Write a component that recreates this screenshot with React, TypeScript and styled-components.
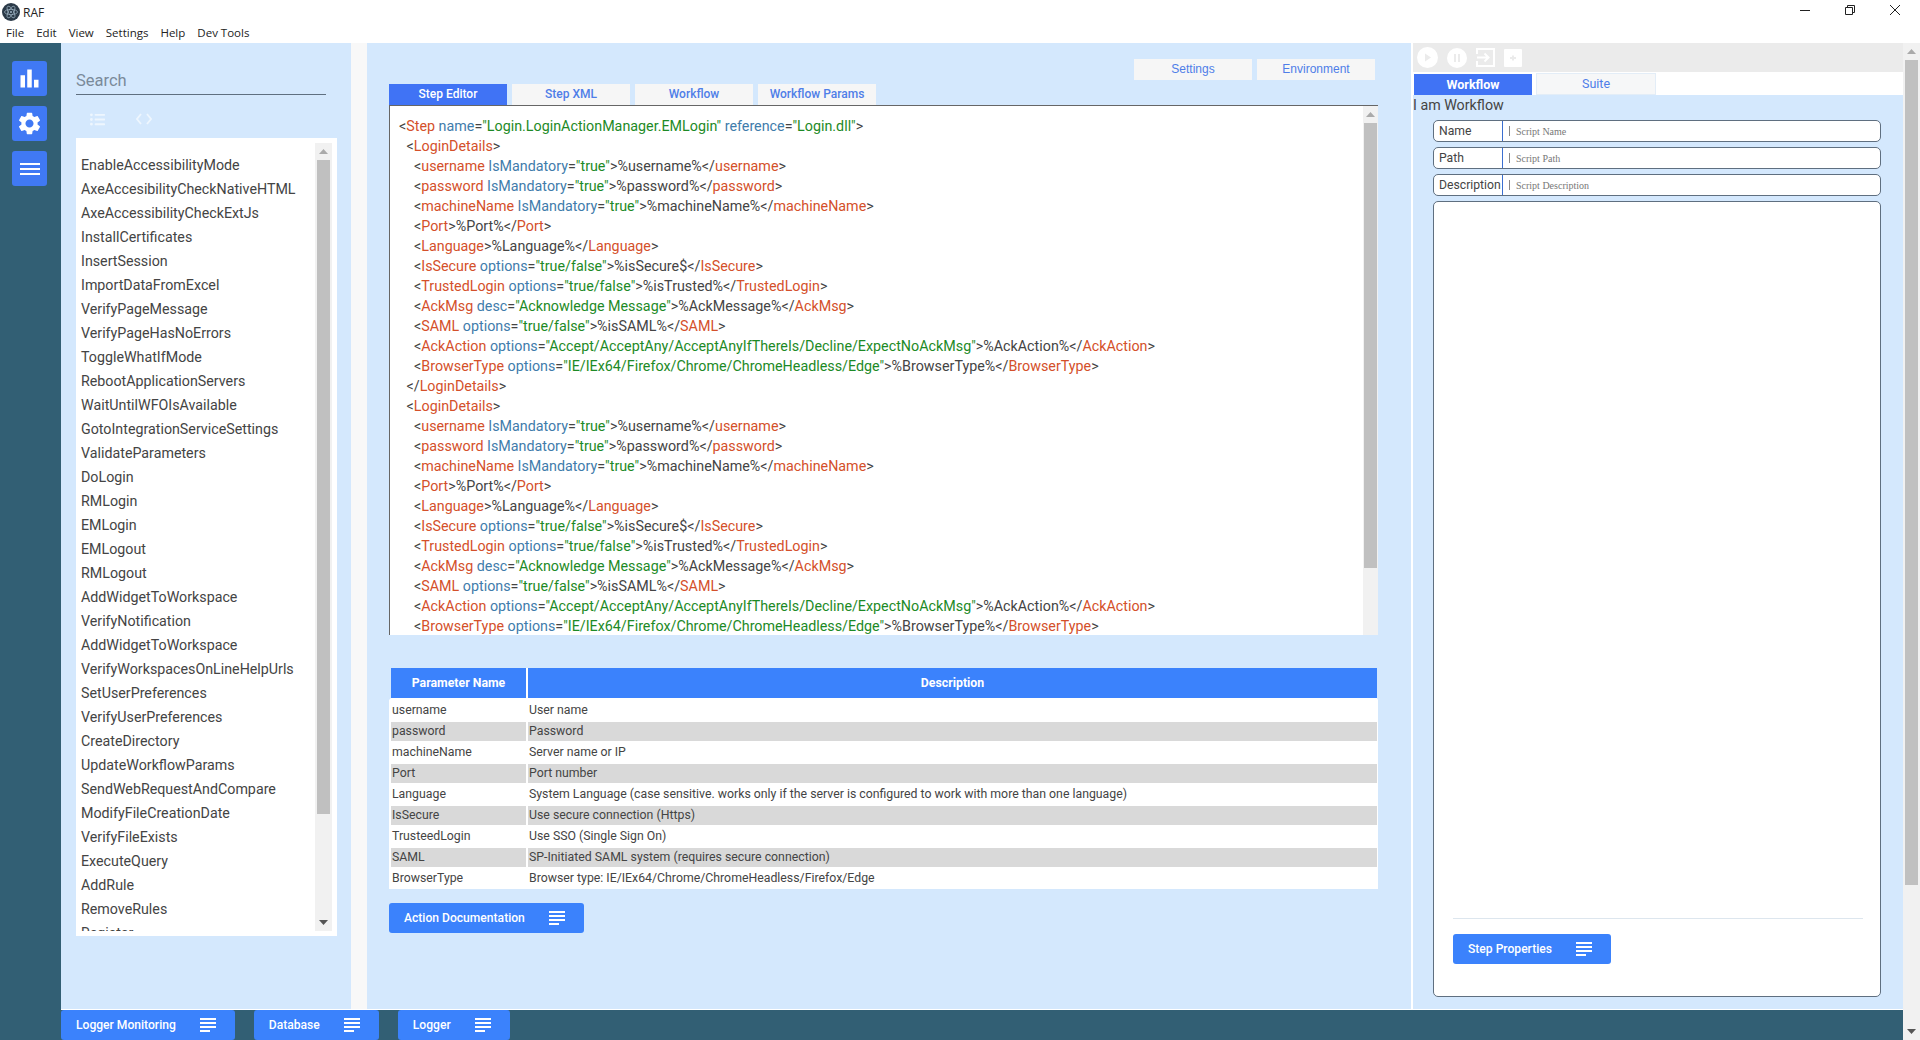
import React from "react";
import styled, {createGlobalStyle} from "styled-components";
import {MdBarChart, MdSettings} from "react-icons/md";
import {FaListUl} from "react-icons/fa";

const GlobalStyle = createGlobalStyle`
    html, body {
        margin: 0;
        padding: 0;
        overflow: hidden;
        background: #fff;
    }
    * { box-sizing: border-box; }
`;

const color = {
    panel: "#d4e8fd",
    sidebar: "#325f74",
    blue: "#3b82fc",
    tabBlue: "#4073f5",
    tabIdle: "#f6f6f6",
    tabText: "#4f7ee8",
    text: "#444",
    line: "#5f6f80",
};

const ACTIONS = [
    "EnableAccessibilityMode", "AxeAccesibilityCheckNativeHTML", "AxeAccessibilityCheckExtJs", "InstallCertificates",
    "InsertSession", "ImportDataFromExcel", "VerifyPageMessage", "VerifyPageHasNoErrors", "ToggleWhatIfMode",
    "RebootApplicationServers", "WaitUntilWFOIsAvailable", "GotoIntegrationServiceSettings", "ValidateParameters",
    "DoLogin", "RMLogin", "EMLogin", "EMLogout", "RMLogout", "AddWidgetToWorkspace", "VerifyNotification",
    "AddWidgetToWorkspace", "VerifyWorkspacesOnLineHelpUrls", "SetUserPreferences", "VerifyUserPreferences",
    "CreateDirectory", "UpdateWorkflowParams", "SendWebRequestAndCompare", "ModifyFileCreationDate", "VerifyFileExists",
    "ExecuteQuery", "AddRule", "RemoveRules", "Register",
];

const PARAMS = [
    ["username", "User name"],
    ["password", "Password"],
    ["machineName", "Server name or IP"],
    ["Port", "Port number"],
    ["Language", "System Language (case sensitive. works only if the server is configured to work with more than one language)"],
    ["IsSecure", "Use secure connection (Https)"],
    ["TrusteedLogin", "Use SSO (Single Sign On)"],
    ["SAML", "SP-Initiated SAML system (requires secure connection)"],
    ["BrowserType", "Browser type: IE/IEx64/Chrome/ChromeHeadless/Firefox/Edge"],
];

type XmlLine = {tag: string; attr?: [string, string]; body: string; close?: string};

const LOGIN_CHILDREN: XmlLine[] = [
    {tag: "username", attr: ["IsMandatory", "true"], body: "%username%"},
    {tag: "password", attr: ["IsMandatory", "true"], body: "%password%"},
    {tag: "machineName", attr: ["IsMandatory", "true"], body: "%machineName%"},
    {tag: "Port", body: "%Port%"},
    {tag: "Language", body: "%Language%"},
    {tag: "IsSecure", attr: ["options", "true/false"], body: "%isSecure$"},
    {tag: "TrustedLogin", attr: ["options", "true/false"], body: "%isTrusted%"},
    {tag: "AckMsg", attr: ["desc", "Acknowledge Message"], body: "%AckMessage%"},
    {tag: "SAML", attr: ["options", "true/false"], body: "%isSAML%"},
    {tag: "AckAction", attr: ["options", "Accept/AcceptAny/AcceptAnyIfThereIs/Decline/ExpectNoAckMsg"], body: "%AckAction%"},
    {tag: "BrowserType", attr: ["options", "IE/IEx64/Firefox/Chrome/ChromeHeadless/Edge"], body: "%BrowserType%"},
];

const Frame = styled.div`
    width: 1920px;
    height: 1040px;
    display: flex;
    flex-direction: column;
    overflow: hidden;
    font-family: Roboto, sans-serif;
    color: ${color.text};
`;

const TitleBar = styled.div`
    height: 24px;
    display: flex;
    align-items: center;
    padding-left: 2px;
    gap: 3px;
    font-family: "Open Sans", sans-serif;
    font-size: 12px;
    color: #222;
`;

const WindowButtons = styled.div`
    margin-left: auto;
    display: flex;
    margin-top: -4px;
    padding-right: 20px;
    gap: 35px;
`;

const MenuBar = styled.div`
    height: 19px;
    display: flex;
    font-family: "Open Sans", sans-serif;
    font-size: 11.5px;
    line-height: 18px;
    color: #222;
`;

const MenuItem = styled.span`
    padding: 0 6px;
`;

const Page = styled.div`
    flex: 1;
    display: flex;
    min-height: 0;
`;

const PageMain = styled.div`
    flex: 1;
    display: flex;
    flex-direction: column;
    min-width: 0;
`;

const Columns = styled.div`
    flex: 1;
    display: flex;
    min-height: 0;
`;

const Sidebar = styled.nav`
    width: 61px;
    background: ${color.sidebar};
    display: flex;
    flex-direction: column;
    align-items: center;
    padding: 18px 2px 0 0;
    gap: 10px;
`;

const SideButton = styled.div`
    width: 35px;
    height: 35px;
    background: #4079f4;
    border-radius: 3px;
    color: #fff;
    display: flex;
    align-items: center;
    justify-content: center;
`;

const Workspace = styled.div`
    flex: 1;
    display: flex;
    padding-bottom: 1px;
    background: #fff;
    min-width: 0;
`;

const LeftPanel = styled.section`
    width: 290px;
    background: ${color.panel};
    padding: 25px 14px 0 15px;
`;

const Divider = styled.div`
    width: 16px;
    background: #f8f8f8;
`;

const SearchBox = styled.div`
    width: 250px;
    height: 27px;
    border-bottom: 1px solid ${color.line};
    font-size: 16.5px;
    line-height: 25px;
    color: #7a8a9a;
`;

const ListTools = styled.div`
    height: 43px;
    display: flex;
    align-items: center;
    gap: 31px;
    padding: 5px 0 0 14px;
    color: #eef6fe;
`;

const ListBox = styled.div`
    width: 261px;
    height: 798px;
    background: #fff;
    display: flex;
    padding: 5px 5px 5px 0;
`;

const ActionList = styled.ul`
    flex: 1;
    list-style: none;
    margin: 0;
    padding: 10px 0 0 5px;
    overflow: hidden;
    font-size: 14.25px;
    line-height: 24px;
    color: #444;
`;

const Track = styled.div<{$width: number}>`
    width: ${props => props.$width}px;
    flex: none;
    background: #f1f1f1;
    display: flex;
    flex-direction: column;
    align-items: center;
`;

const ArrowCell = styled.div`
    height: 17px;
    flex: none;
    width: 100%;
    display: flex;
    align-items: center;
    justify-content: center;
`;

const Thumb = styled.div<{$height: number}>`
    width: 13px;
    height: ${props => props.$height}px;
    flex: none;
    background: #c0c0c0;
`;

const TrackFill = styled.div`
    flex: 1;
`;

const CenterPanel = styled.section`
    width: 1044px;
    background: ${color.panel};
    padding: 16px 33px 0 22px;
`;

const TopTabs = styled.div`
    display: flex;
    justify-content: flex-end;
    gap: 5px;
    padding-right: 3px;
    margin-bottom: 4px;
`;

const TopTab = styled.div`
    width: 118px;
    height: 21px;
    background: ${color.tabIdle};
    color: ${color.tabText};
    font-family: "Liberation Sans", sans-serif;
    font-size: 12px;
    line-height: 21px;
    text-align: center;
`;

const EditorTabs = styled.div`
    display: flex;
    gap: 5px;
`;

const EditorTab = styled.div<{$active?: boolean}>`
    width: 118px;
    height: 21px;
    background: ${props => props.$active ? color.tabBlue : color.tabIdle};
    color: ${props => props.$active ? "#fff" : color.tabText};
    font-size: 12px;
    font-weight: 500;
    line-height: 21px;
    text-align: center;
`;

const Editor = styled.div`
    height: 530px;
    display: flex;
    background: #fff;
    border-top: 1px solid #666;
    border-left: 1px solid #666;
`;

const Code = styled.div`
    flex: 1;
    overflow: hidden;
    padding: 10px 0 0 9px;
    font-size: 14.3px;
    line-height: 20px;
    color: #444;
    white-space: nowrap;
`;

const CodeLine = styled.div<{$indent: number}>`
    padding-left: ${props => props.$indent * 7.5}px;
`;

const TagName = styled.span`
    color: #d4502a;
`;

const AttrName = styled.span`
    color: #3f7cab;
`;

const AttrValue = styled.span`
    color: #1d8a26;
`;

const ParamTable = styled.table`
    width: 989px;
    margin-top: 33px;
    border-collapse: separate;
    border-spacing: 0;
    table-layout: fixed;
    font-size: 12.3px;
`;

const HeadCell = styled.th<{$width?: number}>`
    width: ${props => props.$width ? `${props.$width}px` : "auto"};
    height: 32px;
    padding: 0;
    background: ${color.blue};
    background-clip: padding-box;
    border-bottom: 2px solid #fff;
    border-left: 2px solid #fff;
    color: #fff;
    font-weight: 700;
    font-size: 12.3px;
    text-align: center;

    &:first-child {
        border-left-color: ${color.panel};
    }
    &:last-child {
        border-right: 1px solid ${color.panel};
    }
`;

const BodyCell = styled.td<{$stripe: boolean}>`
    height: 21px;
    padding: 0 0 1px 1px;
    background: ${props => props.$stripe ? "#d9d9d9" : "#fff"};
    background-clip: padding-box;
    border: 1px solid #fff;
    border-left-width: 2px;
    border-right-width: 0;
    color: #444;
    white-space: nowrap;

    &:last-child {
        border-right-width: 1px;
    }
`;

const BlueButton = styled.div`
    display: inline-flex;
    align-items: center;
    flex: none;
    height: 30px;
    padding: 0 19px 0 15px;
    gap: 24px;
    background: ${color.blue};
    border-radius: 3px;
    color: #fff;
    font-size: 12.1px;
    font-weight: 500;
    white-space: nowrap;
`;

const DocButton = styled(BlueButton)`
    margin-top: 14px;
`;

const Gutter = styled.div`
    width: 2px;
`;

const RightPanel = styled.section`
    flex: 1;
    background: ${color.panel};
    display: flex;
    flex-direction: column;
    min-width: 0;
`;

const RunToolbar = styled.div`
    height: 29px;
    flex: none;
    background: #ebebeb;
    display: flex;
    align-items: center;
    padding-left: 4px;
    gap: 9px;
`;

const RunIcon = styled.svg`
    display: block;
`;

const PanelTabs = styled.div`
    height: 23px;
    flex: none;
    background: #fff;
    display: flex;
    align-items: flex-end;
    padding-left: 1px;
    gap: 4px;
`;

const PanelTab = styled.div<{$active?: boolean}>`
    width: ${props => props.$active ? 118 : 120}px;
    height: ${props => props.$active ? 21 : 22}px;
    background: ${props => props.$active ? color.tabBlue : "#f6f7f8"};
    border: ${props => props.$active ? "none" : "1px solid #e3edf7"};
    color: ${props => props.$active ? "#fff" : color.tabText};
    font-size: 12.5px;
    font-weight: ${props => props.$active ? 700 : 400};
    line-height: ${props => props.$active ? 21 : 19}px;
    text-align: center;
`;

const PanelHeading = styled.div`
    height: 25px;
    flex: none;
    font-size: 14.25px;
    line-height: 21px;
`;

const Form = styled.div`
    flex: 1;
    display: flex;
    flex-direction: column;
    gap: 5px;
    padding: 0 22px 12px 20px;
    min-height: 0;
`;

const FormRow = styled.div`
    height: 22px;
    flex: none;
    display: flex;
    background: #fff;
    border: 1px solid ${color.line};
    border-radius: 5px;
`;

const FormLabel = styled.div`
    width: 69px;
    flex: none;
    padding-left: 5px;
    border-right: 1px solid #3b6fd0;
    font-size: 12.2px;
    line-height: 20px;
    white-space: nowrap;
    color: #444;
`;

const FormHint = styled.div`
    padding-left: 6px;
    font-family: "Liberation Serif", serif;
    font-size: 10px;
    line-height: 21px;
    color: #777;
    display: flex;
    align-items: center;
    gap: 6px;
`;

const Caret = styled.span`
    width: 1px;
    height: 10px;
    background: #888;
`;

const StepBox = styled.div`
    flex: 1;
    display: flex;
    flex-direction: column;
    justify-content: flex-end;
    align-items: flex-start;
    padding: 0 17px 32px 19px;
    background: #fff;
    border: 1px solid ${color.line};
    border-radius: 5px;
`;

const StepRule = styled.div`
    width: 100%;
    height: 1px;
    background: #dde6ee;
    margin-bottom: 15px;
`;

const BottomBar = styled.footer`
    height: 30px;
    flex: none;
    background: ${color.sidebar};
    display: flex;
    gap: 19px;
    padding-left: 61px;
`;

const LinesIcon = () => (
    <svg width="16" height="14" viewBox="0 0 16 14" fill="#fff">
        <rect x="0" y="0" width="16" height="2" />
        <rect x="0" y="4" width="16" height="2" />
        <rect x="0" y="8" width="16" height="2" />
        <rect x="0" y="12" width="10" height="2" />
    </svg>
);

const Triangle = ({down}: {down?: boolean}) => (
    <svg width="9" height="5" viewBox="0 0 9 5" fill={down ? "#555" : "#aaa"}>
        <path d={down ? "M0 0h9L4.5 5z" : "M0 5h9L4.5 0z"} />
    </svg>
);

const Scrollbar = ({width, thumb, noEndArrow}: {width: number; thumb: number; noEndArrow?: boolean}) => (
    <Track $width={width}>
        <ArrowCell><Triangle /></ArrowCell>
        <Thumb $height={thumb} />
        <TrackFill />
        {!noEndArrow && <ArrowCell><Triangle down /></ArrowCell>}
    </Track>
);

const AppLogo = () => (
    <svg width="18" height="18" viewBox="0 0 18 18" fill="none" stroke="#9fb4c4" strokeWidth="0.7">
        <circle cx="9" cy="9" r="9" fill="#2b3a48" stroke="none" />
        <ellipse cx="9" cy="9" rx="6.5" ry="2.6" />
        <ellipse cx="9" cy="9" rx="6.5" ry="2.6" transform="rotate(60 9 9)" />
        <ellipse cx="9" cy="9" rx="6.5" ry="2.6" transform="rotate(120 9 9)" />
        <circle cx="9" cy="9" r="1" fill="#9fb4c4" stroke="none" />
    </svg>
);

const Xml = ({line}: {line: XmlLine}) => (
    <>
        {"<"}<TagName>{line.tag}</TagName>
        {line.attr && <>{" "}<AttrName>{line.attr[0]}</AttrName>=<AttrValue>"{line.attr[1]}"</AttrValue></>}
        {">"}{line.body}{"</"}<TagName>{line.tag}</TagName>{">"}
    </>
);

const LoginBlock = () => (
    <>
        <CodeLine $indent={1}>{"<"}<TagName>LoginDetails</TagName>{">"}</CodeLine>
        {LOGIN_CHILDREN.map(line => <CodeLine key={line.tag} $indent={2}><Xml line={line} /></CodeLine>)}
    </>
);

const App = () => (
    <Frame>
        <GlobalStyle />
        <TitleBar>
            <AppLogo />
            RAF
            <WindowButtons>
                <svg width="10" height="10" viewBox="0 0 10 10" stroke="#222" fill="none"><path d="M0 5.5h10" /></svg>
                <svg width="10" height="10" viewBox="0 0 10 10" stroke="#222" fill="none"><path d="M0.5 2.5h7v7h-7zM2.5 2.5v-2h7v7h-2" /></svg>
                <svg width="10" height="10" viewBox="0 0 10 10" stroke="#222" fill="none"><path d="M0 0l10 10M10 0L0 10" /></svg>
            </WindowButtons>
        </TitleBar>
        <MenuBar>
            {["File", "Edit", "View", "Settings", "Help", "Dev Tools"].map(item => <MenuItem key={item}>{item}</MenuItem>)}
        </MenuBar>
        <Page>
            <PageMain>
                <Columns>
                    <Sidebar>
                        <SideButton><MdBarChart size={27} /></SideButton>
                        <SideButton><MdSettings size={27} /></SideButton>
                        <SideButton>
                            <svg width="20" height="12" viewBox="0 0 20 12" fill="#fff">
                                <rect y="0" width="20" height="2" />
                                <rect y="5" width="20" height="2" />
                                <rect y="10" width="20" height="2" />
                            </svg>
                        </SideButton>
                    </Sidebar>
                    <Workspace>
                        <LeftPanel>
                            <SearchBox>Search</SearchBox>
                            <ListTools>
                                <FaListUl size={15} />
                                <svg width="16" height="12" viewBox="0 0 16 12" fill="none" stroke="currentColor" strokeWidth="1.8">
                                    <path d="M5 1L1 6l4 5M11 1l4 5-4 5" />
                                </svg>
                            </ListTools>
                            <ListBox>
                                <ActionList>
                                    {ACTIONS.map((name, i) => <li key={i}>{name}</li>)}
                                </ActionList>
                                <Scrollbar width={17} thumb={654} />
                            </ListBox>
                        </LeftPanel>
                        <Divider />
                        <CenterPanel>
                            <TopTabs>
                                <TopTab>Settings</TopTab>
                                <TopTab>Environment</TopTab>
                            </TopTabs>
                            <EditorTabs>
                                <EditorTab $active>Step Editor</EditorTab>
                                <EditorTab>Step XML</EditorTab>
                                <EditorTab>Workflow</EditorTab>
                                <EditorTab>Workflow Params</EditorTab>
                            </EditorTabs>
                            <Editor>
                                <Code>
                                    <CodeLine $indent={0}>
                                        {"<"}<TagName>Step</TagName>{" "}
                                        <AttrName>name</AttrName>=<AttrValue>"Login.LoginActionManager.EMLogin"</AttrValue>{" "}
                                        <AttrName>reference</AttrName>=<AttrValue>"Login.dll"</AttrValue>{">"}
                                    </CodeLine>
                                    <LoginBlock />
                                    <CodeLine $indent={1}>{"</"}<TagName>LoginDetails</TagName>{">"}</CodeLine>
                                    <LoginBlock />
                                </Code>
                                <Scrollbar width={15} thumb={445} noEndArrow />
                            </Editor>
                            <ParamTable>
                                <thead>
                                    <tr>
                                        <HeadCell $width={137}>Parameter Name</HeadCell>
                                        <HeadCell>Description</HeadCell>
                                    </tr>
                                </thead>
                                <tbody>
                                    {PARAMS.map(([name, desc], i) => (
                                        <tr key={name}>
                                            <BodyCell $stripe={i % 2 === 1}>{name}</BodyCell>
                                            <BodyCell $stripe={i % 2 === 1}>{desc}</BodyCell>
                                        </tr>
                                    ))}
                                </tbody>
                            </ParamTable>
                            <DocButton>Action Documentation<LinesIcon /></DocButton>
                        </CenterPanel>
                        <Gutter />
                        <RightPanel>
                            <RunToolbar>
                                <RunIcon width="21" height="21" viewBox="0 0 21 21">
                                    <circle cx="10.5" cy="10.5" r="10.5" fill="#fff" />
                                    <path d="M8 6.5l6 4-6 4z" fill="#ebebeb" />
                                </RunIcon>
                                <RunIcon width="20" height="20" viewBox="0 0 20 20">
                                    <circle cx="10" cy="10" r="10" fill="#fff" />
                                    <path d="M7 6h2v8H7zM11 6h2v8h-2z" fill="#ebebeb" />
                                </RunIcon>
                                <RunIcon width="19" height="19" viewBox="0 0 19 19" fill="none" stroke="#fff" strokeWidth="2">
                                    <path d="M1 6V1h17v17H1v-5M1 9.5h11M8.5 5.5l4 4-4 4" />
                                </RunIcon>
                                <RunIcon width="18" height="18" viewBox="0 0 18 18">
                                    <rect width="18" height="18" rx="1" fill="#fff" />
                                    <path d="M6 9h6M9 6.5v5" stroke="#ebebeb" strokeWidth="2" />
                                </RunIcon>
                            </RunToolbar>
                            <PanelTabs>
                                <PanelTab $active>Workflow</PanelTab>
                                <PanelTab>Suite</PanelTab>
                            </PanelTabs>
                            <PanelHeading>I am Workflow</PanelHeading>
                            <Form>
                                <FormRow><FormLabel>Name</FormLabel><FormHint><Caret />Script Name</FormHint></FormRow>
                                <FormRow><FormLabel>Path</FormLabel><FormHint><Caret />Script Path</FormHint></FormRow>
                                <FormRow><FormLabel>Description</FormLabel><FormHint><Caret />Script Description</FormHint></FormRow>
                                <StepBox>
                                    <StepRule />
                                    <BlueButton>Step Properties<LinesIcon /></BlueButton>
                                </StepBox>
                            </Form>
                        </RightPanel>
                    </Workspace>
                </Columns>
                <BottomBar>
                    <BlueButton>Logger Monitoring<LinesIcon /></BlueButton>
                    <BlueButton>Database<LinesIcon /></BlueButton>
                    <BlueButton>Logger<LinesIcon /></BlueButton>
                </BottomBar>
            </PageMain>
            <Scrollbar width={17} thumb={825} />
        </Page>
    </Frame>
);

export default App;
